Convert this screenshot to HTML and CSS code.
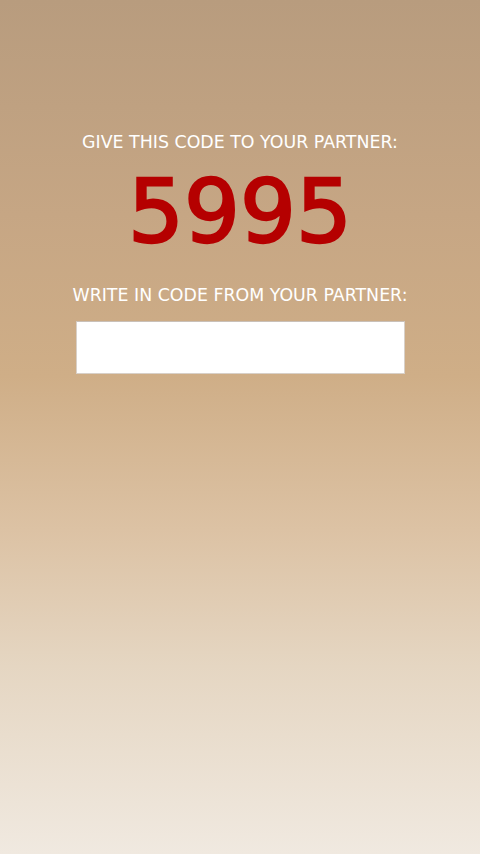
FILE: index.html
```html
<!DOCTYPE html>
<html>
<head>
<meta charset="utf-8">
<link rel="stylesheet" href="styles.css">
</head>
<body>
<main class="screen">
  <p class="label label-give">GIVE THIS CODE TO YOUR PARTNER:</p>
  <div class="code">5995</div>
  <p class="label label-write">WRITE IN CODE FROM YOUR PARTNER:</p>
  <input class="code-input" type="text" aria-label="Partner code">
</main>
</body>
</html>
```
FILE: styles.css
```css
html, body {
  margin: 0;
  padding: 0;
  height: 100%;
}
body {
  background: linear-gradient(to bottom, #b89c7e 0%, #c6a684 25%, #cfae87 44%, #dcc2a4 62%, #e5d6c2 78%, #f0e9e0 100%);
  font-family: "DejaVu Sans", Verdana, sans-serif;
}
.screen {
  width: 480px;
  height: 854px;
  display: flex;
  flex-direction: column;
  align-items: center;
  padding-top: 131px;
  box-sizing: border-box;
}
.label {
  margin: 0;
  color: #ffffff;
  font-size: 17.4px;
  line-height: 22px;
}
.code {
  margin-top: 14px;
  color: #b50000;
  font-size: 88px;
  line-height: 90px;
  font-weight: normal;
  -webkit-text-stroke: 2.4px #b50000;
}
.label-write {
  margin-top: 27px;
}
.code-input {
  margin-top: 15px;
  width: 329px;
  height: 53px;
  box-sizing: border-box;
  border: 1px solid #d8d0c8;
  border-top-color: #c9c0b8;
  background: #ffffff;
  outline: none;
  padding: 0 8px;
  font-size: 20px;
}
```
